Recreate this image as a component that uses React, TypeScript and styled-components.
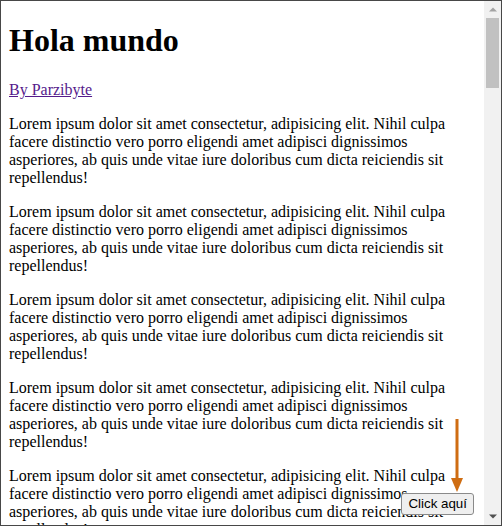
import React from "react";
import styled, { createGlobalStyle } from "styled-components";

const GlobalStyle = createGlobalStyle`
  html, body { margin: 0; padding: 0; background: #ffffff; }
  #root { width: 502px; height: 526px; }
`;

const Frame = styled.div`
  position: relative;
  width: 502px;
  height: 526px;
  box-sizing: border-box;
  border: 1px solid #474747;
  background: #ffffff;
  display: flex;
  flex-direction: row;
`;

const Viewport = styled.div`
  flex: 1;
  min-width: 0;
  height: 100%;
  overflow: hidden;
  box-sizing: border-box;
  padding: 0 8px 8px;
  font-family: "Liberation Serif", "Times New Roman", serif;
  font-size: 16px;
  color: #000000;
  display: flow-root;
`;

const ScrollBar = styled.div`
  width: 17px;
  flex: none;
  height: 100%;
  background: #f1f1f1;
  display: flex;
  flex-direction: column;
`;

const ScrollButton = styled.div`
  height: 17px;
  flex: none;
  display: flex;
  align-items: center;
  justify-content: center;
`;

const Track = styled.div`
  flex: 1;
  display: flex;
  flex-direction: column;
  padding: 0 2px;
`;

const Thumb = styled.div`
  height: 70px;
  background: #c1c1c1;
`;

const Title = styled.h1`
  font-size: 32px;
  font-weight: bold;
  margin: 21.44px 0;
`;

const AuthorLine = styled.p`
  margin: 16px 0;
`;

const AuthorLink = styled.a`
  color: #551a8b;
  text-decoration: underline;
`;

const Paragraph = styled.p`
  margin: 16px 0;
`;

const Overlay = styled.div`
  position: absolute;
  right: 27px;
  bottom: 10px;
  display: flex;
  flex-direction: column;
  align-items: center;
`;

const ArrowWrap = styled.div`
  align-self: flex-end;
  margin-right: 10px;
  display: flex;
`;

const HelpButton = styled.button`
  font-family: "Liberation Sans", Arial, sans-serif;
  font-size: 13.33px;
  color: #000000;
  background: #efefef;
  border: 1px solid #8a8a8a;
  border-radius: 3px;
  padding: 2px 6px;
  line-height: 16px;
  cursor: pointer;
`;

const LOREM =
  "Lorem ipsum dolor sit amet consectetur, adipisicing elit. Nihil culpa facere distinctio vero porro eligendi amet adipisci dignissimos asperiores, ab quis unde vitae iure doloribus cum dicta reiciendis sit repellendus!";

export default function App() {
  const paragraphs = Array.from({ length: 6 }, (_, i) => i);
  return (
    <>
      <GlobalStyle />
      <Frame>
        <Viewport>
          <Title>Hola mundo</Title>
          <AuthorLine>
            <AuthorLink href="#">By Parzibyte</AuthorLink>
          </AuthorLine>
          {paragraphs.map((i) => (
            <Paragraph key={i}>{LOREM}</Paragraph>
          ))}
        </Viewport>
        <ScrollBar>
          <ScrollButton>
            <svg width="8" height="5" viewBox="0 0 8 5">
              <polygon points="0,4.5 8,4.5 4,0.5" fill="#a3a3a3" />
            </svg>
          </ScrollButton>
          <Track>
            <Thumb />
          </Track>
          <ScrollButton>
            <svg width="8" height="5" viewBox="0 0 8 5">
              <polygon points="0,0.5 8,0.5 4,4.5" fill="#505050" />
            </svg>
          </ScrollButton>
        </ScrollBar>
        <Overlay>
          <ArrowWrap>
            <svg width="14" height="74" viewBox="0 0 14 74">
              <rect x="5.5" y="0" width="3" height="62" fill="#cf6d12" />
              <polygon points="1,59 13,59 7,73" fill="#cf6d12" />
            </svg>
          </ArrowWrap>
          <HelpButton>Click aquí</HelpButton>
        </Overlay>
      </Frame>
    </>
  );
}
